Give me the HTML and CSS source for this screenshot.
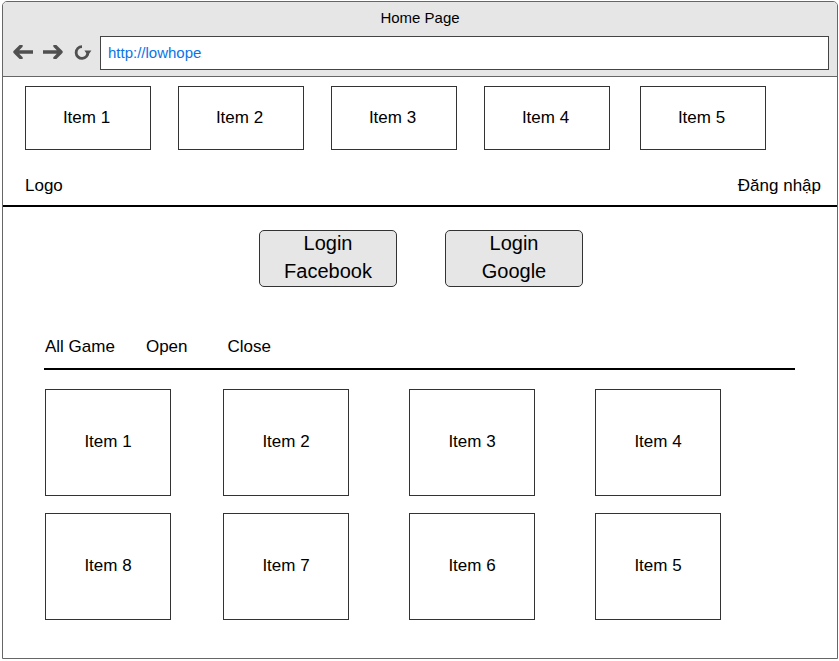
FILE: index.html
```html
<!DOCTYPE html>
<html lang="vi">
<head>
<meta charset="utf-8">
<title>Home Page</title>
<link rel="stylesheet" href="styles.css">
</head>
<body>
<div class="window">
  <div class="titlebar">
    <div class="title">Home Page</div>
    <div class="navrow">
      <svg class="navicon" width="21" height="14" viewBox="0 0 21 14"><path d="M20.5 7H3M9 1L3 7l6 6" fill="none" stroke="#505050" stroke-width="3.4" stroke-linejoin="round" stroke-linecap="round"/></svg>
      <svg class="navicon" width="21" height="14" viewBox="0 0 21 14"><path d="M0.5 7H18M12 1l6 6-6 6" fill="none" stroke="#505050" stroke-width="3.4" stroke-linejoin="round" stroke-linecap="round"/></svg>
      <svg class="navicon reload" width="19" height="15" viewBox="0 0 19 15"><path d="M8 1.6A5.9 5.9 0 1 0 13.9 7" fill="none" stroke="#505050" stroke-width="2.8"/><path d="M10.4 5.6h7l-3.5 4.8z" fill="#505050"/></svg>
      <div class="url">http://lowhope</div>
    </div>
  </div>
  <header class="header">
    <nav class="topitems">
      <div class="topitem">Item 1</div>
      <div class="topitem">Item 2</div>
      <div class="topitem">Item 3</div>
      <div class="topitem">Item 4</div>
      <div class="topitem topitem-last">Item 5</div>
    </nav>
    <div class="logorow">
      <span>Logo</span>
      <span>Đăng nhập</span>
    </div>
  </header>
  <main class="main">
    <div class="logins">
      <div class="login"><span>Login</span><span>Facebook</span></div>
      <div class="login"><span>Login</span><span>Google</span></div>
    </div>
    <div class="tabs">
      <span class="tab tab-all">All Game</span>
      <span class="tab tab-open">Open</span>
      <span class="tab">Close</span>
    </div>
    <div class="grid">
      <div class="card">Item 1</div>
      <div class="card">Item 2</div>
      <div class="card">Item 3</div>
      <div class="card">Item 4</div>
      <div class="card">Item 8</div>
      <div class="card">Item 7</div>
      <div class="card">Item 6</div>
      <div class="card">Item 5</div>
    </div>
  </main>
</div>
</body>
</html>
```
FILE: styles.css
```css
* { box-sizing: border-box; }
html, body { margin: 0; padding: 0; background: #fff; }
body { font-family: "Liberation Sans", Arial, sans-serif; color: #000; }

.window {
  margin: 1px 0 0 2px;
  width: 836px;
  height: 658px;
  border: 1px solid #666;
  border-radius: 5px 5px 0 0;
  overflow: hidden;
  background: #fff;
}

.titlebar {
  background: #e6e6e6;
  height: 75px;
  border-bottom: 1px solid #666;
  padding-bottom: 6px;
}
.title {
  height: 30px;
  line-height: 30px;
  padding-top: 1px;
  font-size: 15px;
  text-align: center;
}
.navrow {
  margin-top: 4px;
  display: flex;
  align-items: center;
  padding: 0 8px 0 9px;
}
.navicon { display: block; margin: 0 10px 2px 0; flex: none; }
.navicon.reload { margin-right: 7px; }
.url {
  flex: 1;
  height: 34px;
  line-height: 32px;
  border: 1px solid #444;
  background: #fff;
  color: #0b74e6;
  font-size: 15px;
  padding-left: 7px;
}

.header {
  border-bottom: 2px solid #000;
  padding: 9px 15px 9px 22px;
}
.topitems { display: flex; gap: 27px; }
.topitem {
  width: 126px;
  height: 64px;
  border: 1px solid #333;
  display: flex;
  align-items: center;
  justify-content: center;
  font-size: 17px;
  padding-right: 3px;
}
.topitem-last { margin-left: 3px; }
.logorow {
  margin-top: 26px;
  display: flex;
  justify-content: space-between;
  font-size: 17px;
  line-height: 20px;
  padding-right: 1px;
}

.main { padding-top: 23px; }
.logins { display: flex; justify-content: center; gap: 48px; padding-left: 2px; }
.login {
  width: 138px;
  height: 57px;
  border: 1px solid #333;
  border-radius: 5px;
  background: #e6e6e6;
  display: flex;
  flex-direction: column;
  align-items: center;
  justify-content: center;
  padding-bottom: 3px;
  font-size: 20px;
  line-height: 28px;
}

.tabs {
  margin: 49px 0 0 41px;
  width: 751px;
  display: flex;
  font-size: 17px;
  line-height: 20px;
  padding: 1px 0 11px 1px;
  border-bottom: 2px solid #000;
}
.tab-all { margin-right: 31px; }
.tab-open { margin-right: 40px; }

.grid {
  margin: 19px 0 0 42px;
  display: grid;
  grid-template-columns: 178px 186px 186px 126px;
  row-gap: 17px;
}
.card {
  width: 126px;
  height: 107px;
  border: 1px solid #333;
  display: flex;
  align-items: center;
  justify-content: center;
  font-size: 17px;
  padding: 0 0 2px 0;
}
```
